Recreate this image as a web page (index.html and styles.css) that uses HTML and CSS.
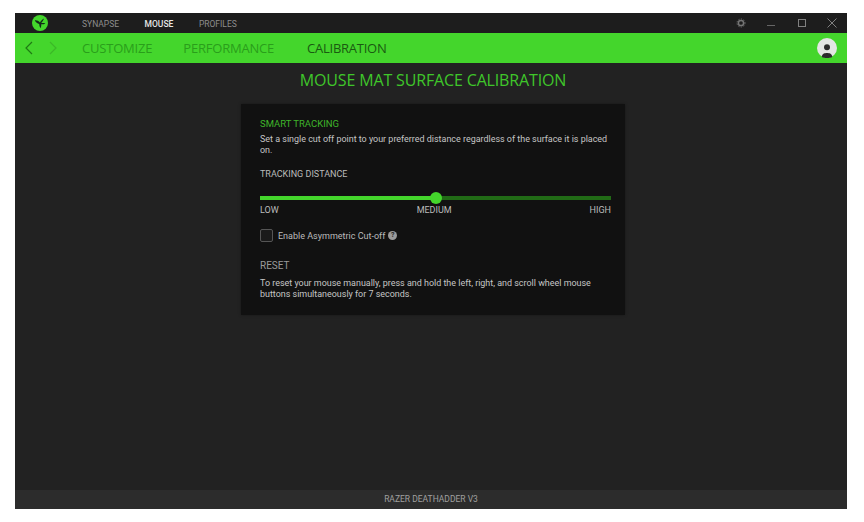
FILE: index.html
```html
<!DOCTYPE html>
<html lang="en">
<head>
<meta charset="utf-8">
<title>Razer Synapse</title>
<link rel="stylesheet" href="styles.css">
</head>
<body>
<div class="window">
  <header class="titlebar">
    <div class="logo-slot">
      <svg class="logo" viewBox="0 0 16 16" width="16" height="16"><circle cx="8" cy="8" r="8" fill="#44d62c"/><path d="M2.8 5.4C5 5.2 6.6 6 8 7.4C9 6 10.2 4.6 12 3.6C11.4 5.4 10.4 6.8 9.2 8C10.6 7.8 12 7.8 13.4 8.4C12 9.2 10.6 9.4 9.2 9.2C9.4 10.6 9.2 12 8.4 13.2C7.6 11.8 7.2 10.4 7.2 9C5.4 8.4 3.8 7.2 2.8 5.4Z" fill="#12291a"/></svg>
    </div>
    <nav class="topnav">
      <span>SYNAPSE</span>
      <span class="active">MOUSE</span>
      <span>PROFILES</span>
    </nav>
    <div class="winctl">
      <svg viewBox="0 0 12 12" width="12" height="12"><circle cx="6" cy="6" r="2.6" fill="none" stroke="#757575" stroke-width="1.5"/><circle cx="6" cy="6" r="4" fill="none" stroke="#757575" stroke-width="0.9" stroke-dasharray="1.3 1.3"/></svg>
      <svg viewBox="0 0 12 12" width="12" height="12"><path d="M2 8.5H10" stroke="#666" stroke-width="1"/></svg>
      <svg viewBox="0 0 12 12" width="12" height="12"><rect x="2.5" y="2.5" width="7" height="7" fill="none" stroke="#808080" stroke-width="1"/></svg>
      <svg viewBox="0 0 12 12" width="12" height="12"><path d="M1.5 1.5L10.5 10.5M10.5 1.5L1.5 10.5" stroke="#808080" stroke-width="1"/></svg>
    </div>
  </header>
  <div class="subbar">
    <div class="arrows">
      <svg viewBox="0 0 10 14" width="10" height="14"><path d="M8 1L2 7L8 13" fill="none" stroke="#1f7a14" stroke-width="1.2"/></svg>
      <svg viewBox="0 0 10 14" width="10" height="14"><path d="M2 1L8 7L2 13" fill="none" stroke="#3cb828" stroke-width="1.2"/></svg>
    </div>
    <nav class="subnav">
      <span>CUSTOMIZE</span>
      <span>PERFORMANCE</span>
      <span class="active">CALIBRATION</span>
    </nav>
    <svg class="avatar" viewBox="0 0 20 20" width="20" height="20"><circle cx="10" cy="10" r="10" fill="#e4e6e4"/><circle cx="10" cy="9.3" r="3" fill="#2b2b2b"/><path d="M4.8 19C5 15.6 7.4 15 10 15S15 15.6 15.2 19C13 20.3 7 20.3 4.8 19Z" fill="#2b2b2b"/></svg>
  </div>
  <main class="content">
    <h1 class="page-title">MOUSE MAT SURFACE CALIBRATION</h1>
    <section class="card">
      <h2 class="card-title">SMART TRACKING</h2>
      <p class="desc">Set a single cut off point to your preferred distance regardless of the surface it is placed on.</p>
      <div class="label">TRACKING DISTANCE</div>
      <div class="slider"><div class="fill"></div><div class="rest"></div><div class="knob"></div></div>
      <div class="ticks"><span>LOW</span><span>MEDIUM</span><span>HIGH</span></div>
      <div class="check-row">
        <span class="checkbox"></span>
        <span class="check-label">Enable Asymmetric Cut-off</span>
        <span class="help">?</span>
      </div>
      <h3 class="reset">RESET</h3>
      <p class="desc reset-text">To reset your mouse manually, press and hold the left, right, and scroll wheel mouse buttons simultaneously for 7 seconds.</p>
    </section>
  </main>
  <footer class="footer">RAZER DEATHADDER V3</footer>
</div>
</body>
</html>
```
FILE: styles.css
```css
* { box-sizing: border-box; }
html, body { margin: 0; height: 100%; background: #fff; }
body { padding: 13px 17px 13px 15px; font-family: Roboto, "Liberation Sans", sans-serif; }
.window { height: 496px; background: #222; display: flex; flex-direction: column; overflow: hidden; }
.titlebar { height: 20px; background: #1d1d1d; display: flex; align-items: center; flex: none; }
.logo-slot { width: 67px; padding-left: 17px; display: flex; }
.logo { display: block; }
.topnav { display: flex; gap: 25.5px; padding-top: 1px; font-size: 8.5px; color: #8d8d8d; }
.topnav .active { color: #e6e6e6; font-weight: 500; }
.winctl { margin-left: auto; display: flex; gap: 18.4px; padding-right: 9px; align-items: center; }
.winctl svg { display: block; }
.subbar { height: 30px; background: #44d62c; display: flex; align-items: center; flex: none; }
.arrows { width: 67px; padding-left: 9px; display: flex; gap: 14px; }
.arrows svg { display: block; }
.subnav { display: flex; gap: 31px; font-family: "Open Sans", sans-serif; font-size: 13px; color: #2a9e1b; letter-spacing: -0.2px; }
.subnav .active { color: #1a5a11; margin-left: 2px; letter-spacing: -0.25px; }
.avatar { margin-left: auto; margin-right: 10px; display: block; }
.content { flex: 1; display: flex; flex-direction: column; align-items: center; min-height: 0; padding-left: 4px; }
.page-title { margin: 7px 0 14px; font-family: "Open Sans", sans-serif; font-weight: 400; font-size: 16px; letter-spacing: -0.15px; line-height: 20px; color: #3fc62a; }
.card { width: 384px; height: 211px; background: #111; padding: 14px 14px 0 19px; box-shadow: 0 0 3px rgba(0,0,0,.35); }
.card-title { margin: 0; font-weight: 400; font-size: 9.5px; line-height: 11px; color: #3fb52a; }
.desc { margin: 5px 0 0; font-size: 8.95px; line-height: 11px; color: #c6c6c6; }
.label { margin-top: 13px; font-size: 9px; line-height: 11px; color: #bbb; }
.slider { position: relative; display: flex; height: 4px; margin-top: 16px; }
.fill { width: 50%; background: #44d62c; }
.rest { flex: 1; background: #216b16; }
.knob { position: absolute; left: 50%; top: -4px; width: 12px; height: 12px; margin-left: -6px; border-radius: 50%; background: #44d62c; }
.ticks { display: flex; justify-content: space-between; margin-top: 5px; font-size: 9px; line-height: 11px; color: #bbb; }
.check-row { display: flex; align-items: center; margin-top: 13px; }
.checkbox { width: 13px; height: 13px; border: 1px solid #555; border-radius: 2px; background: #1a1a1a; }
.check-label { margin-left: 5px; font-size: 9px; color: #bbb; }
.help { width: 9px; height: 9px; margin-left: 3px; border-radius: 50%; background: #9a9a9a; color: #222; font-size: 7px; line-height: 9px; text-align: center; font-weight: 700; }
.reset { margin: 18px 0 0; font-weight: 400; font-size: 10px; line-height: 12px; color: #9a9a9a; }
.reset-text { margin-top: 6px; }
.footer { height: 19px; flex: none; background: #2c2c2c; color: #a0a0a0; text-align: center; font-size: 8.5px; line-height: 19px; }
```
